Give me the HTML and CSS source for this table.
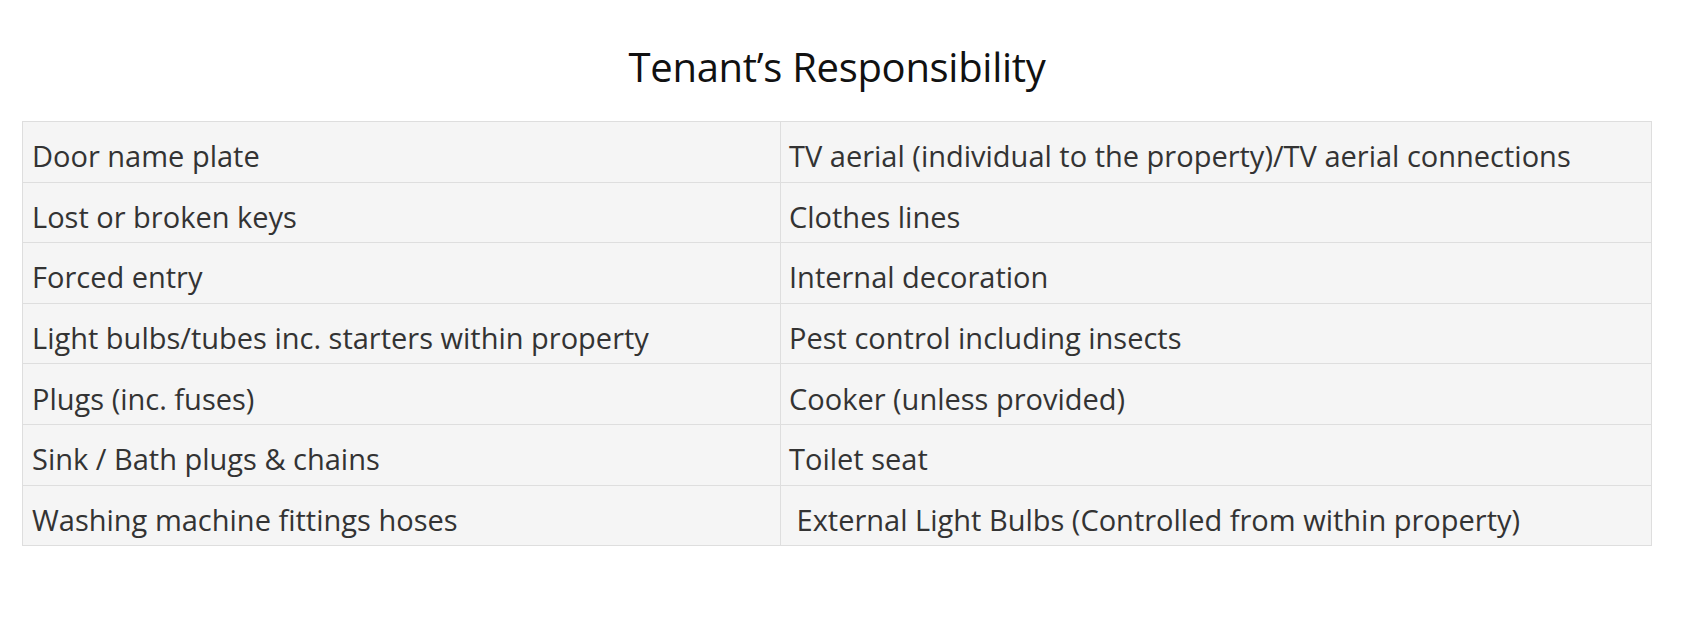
FILE: index.html
```html
<!DOCTYPE html>
<html lang="en">
<head>
<meta charset="utf-8">
<title>Tenant's Responsibility</title>
<link rel="stylesheet" href="styles.css">
</head>
<body>
<main class="page">
  <h1 class="title">Tenant’s Responsibility</h1>
  <table class="resp">
    <tbody>
      <tr><td>Door name plate</td><td>TV aerial (individual to the property)/TV aerial connections</td></tr>
      <tr><td>Lost or broken keys</td><td>Clothes lines</td></tr>
      <tr><td>Forced entry</td><td>Internal decoration</td></tr>
      <tr><td>Light bulbs/tubes inc. starters within property</td><td>Pest control including insects</td></tr>
      <tr><td>Plugs (inc. fuses)</td><td>Cooker (unless provided)</td></tr>
      <tr><td>Sink / Bath plugs &amp; chains</td><td>Toilet seat</td></tr>
      <tr><td>Washing machine fittings hoses</td><td>&nbsp;External Light Bulbs (Controlled from within property)</td></tr>
    </tbody>
  </table>
</main>
</body>
</html>
```

FILE: styles.css
```css
html, body {
  margin: 0;
  padding: 0;
  background: #ffffff;
}

.page {
  padding: 0 33px 0 22px;
  font-family: "Open Sans", "Noto Sans", "DejaVu Sans", sans-serif;
}

.title {
  margin: 0 0 27px 0;
  padding-top: 40px;
  text-align: center;
  font-size: 40px;
  font-weight: 400;
  color: #111111;
  line-height: 54px;
  letter-spacing: -0.3px;
}

.resp {
  width: 100%;
  border-collapse: collapse;
  background: #f5f5f5;
  table-layout: fixed;
}

.resp td {
  border: 1px solid #dedede;
  height: 60.6px;
  box-sizing: border-box;
  padding: 8px 8px 0 9px;
  font-size: 29px;
  color: #333333;
  vertical-align: middle;
  white-space: nowrap;
}

.resp td + td {
  padding-left: 8px;
}

.resp td:first-child {
  width: 758px;
}
```
